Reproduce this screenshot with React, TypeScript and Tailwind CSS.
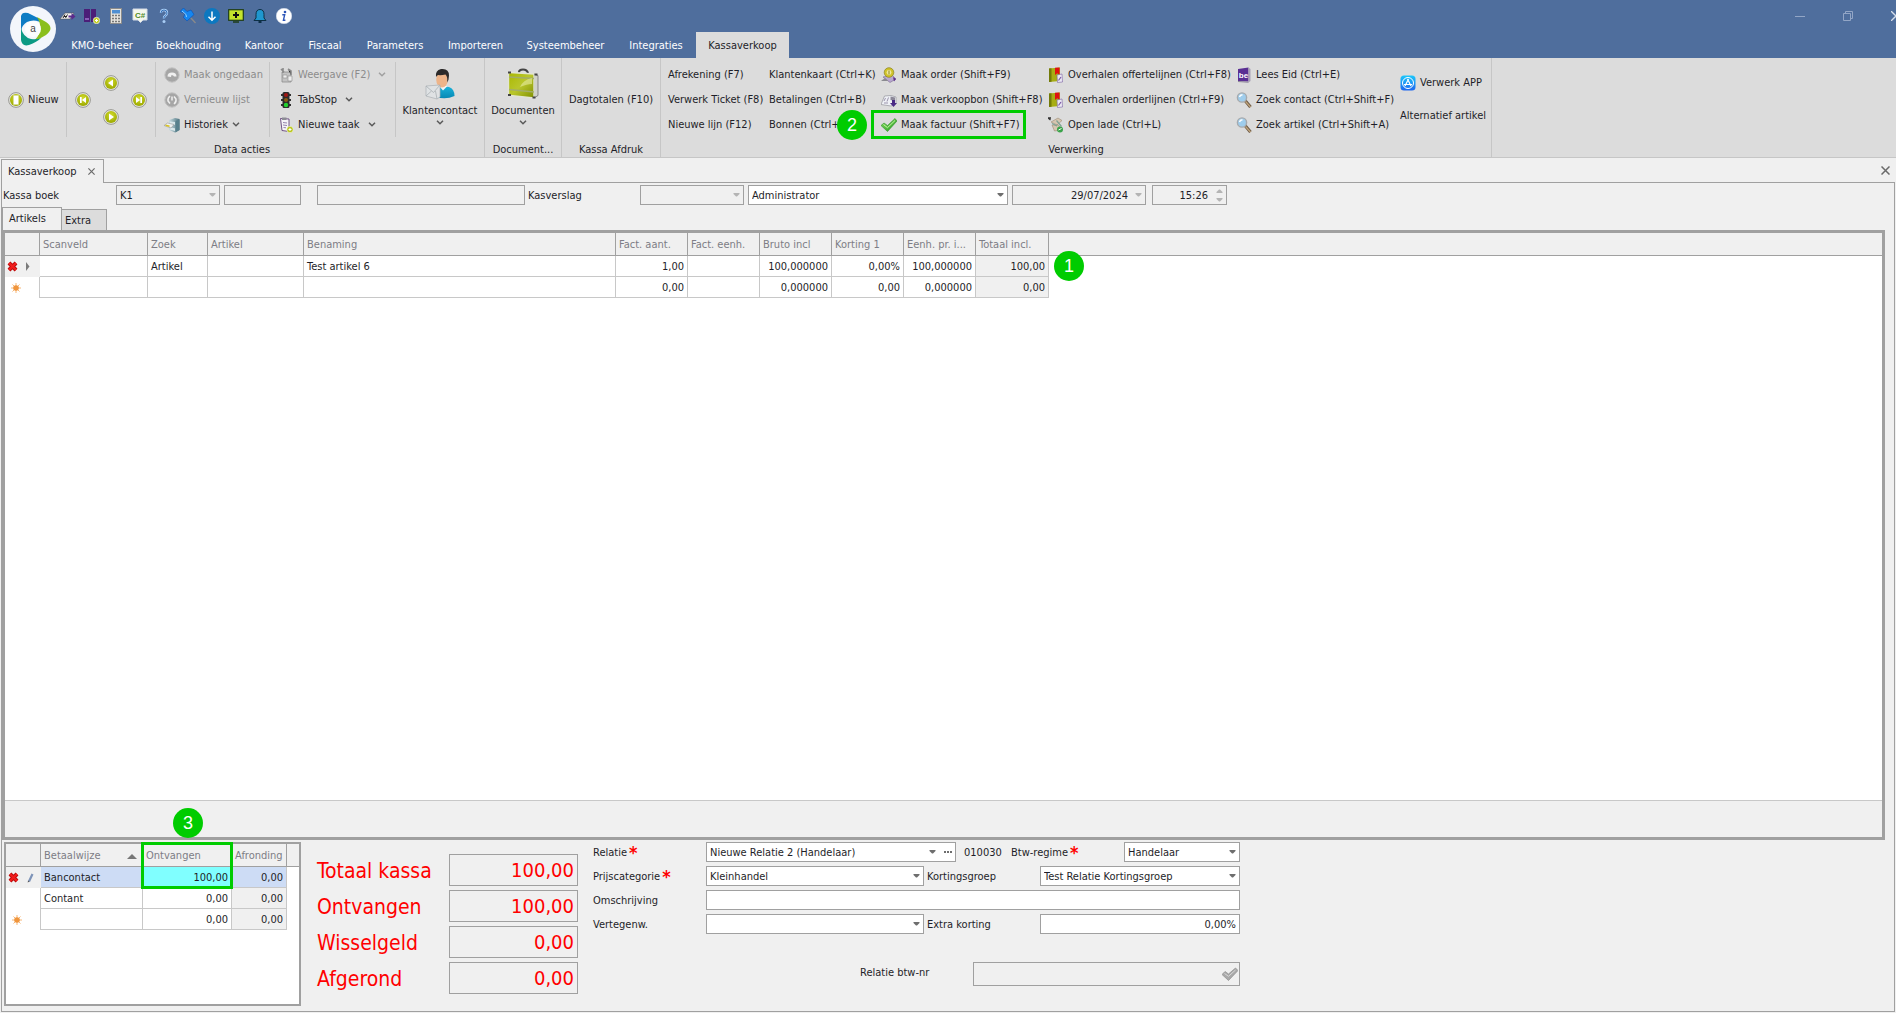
import React from "react";

type Kids = { children?: React.ReactNode };

/* ---------- icon primitives ---------- */

function Svg({ children, size = "s" }: Kids & { size?: "s" | "l" }) {
  return size === "s" ? (
    <svg viewBox="0 0 16 16" className="size-4 shrink-0" aria-hidden="true">{children}</svg>
  ) : (
    <svg viewBox="0 0 32 32" className="size-8 shrink-0" aria-hidden="true">{children}</svg>
  );
}

function Defs() {
  return (
    <svg className="absolute size-0" aria-hidden="true">
      <defs>
        <radialGradient id="olive" cx="50%" cy="35%" r="65%">
          <stop offset="0" stopColor="#d3dc2c" />
          <stop offset="1" stopColor="#9ba800" />
        </radialGradient>
        <linearGradient id="case" x1="0" y1="0" x2="1" y2="1">
          <stop offset="0" stopColor="#a9b800" />
          <stop offset="0.5" stopColor="#b9c62c" />
          <stop offset="1" stopColor="#7f8f00" />
        </linearGradient>
        <linearGradient id="shirt" x1="0" y1="0" x2="0" y2="1">
          <stop offset="0" stopColor="#19b4dc" />
          <stop offset="1" stopColor="#0788b4" />
        </linearGradient>
        <linearGradient id="store" x1="0" y1="0" x2="0" y2="1">
          <stop offset="0" stopColor="#1cc8fb" />
          <stop offset="1" stopColor="#1d66f0" />
        </linearGradient>
        <linearGradient id="okGreen" x1="0" y1="0" x2="1" y2="1">
          <stop offset="0" stopColor="#8be060" />
          <stop offset="1" stopColor="#1f9a1f" />
        </linearGradient>
        <linearGradient id="metal" x1="0" y1="0" x2="1" y2="0">
          <stop offset="0" stopColor="#c9dde2" />
          <stop offset="1" stopColor="#4f7480" />
        </linearGradient>
      </defs>
    </svg>
  );
}

function Logo() {
  return (
    <svg viewBox="0 0 46 46" className="size-[46px]" aria-hidden="true">
      <circle cx="23" cy="23" r="23" fill="#f3f6fb" />
      <path d="M11 25V10q1-4.500 7-3l10 5q5 3 6 6Q25 12 17 16q-5 3-6 9z" fill="#0d7cc4" />
      <path d="M27 11l9 5q9 6 0 13l-7 4-8 4q8-5 9-13 1-7-3-13z" fill="#8abf1c" />
      <path d="M11 22q2 9 10 11 6 1 10-1-4 4-12 7-7 2-8-5z" fill="#0b9a84" />
      <circle cx="23" cy="23" r="8" fill="#fbfdfd" />
      <text x="23" y="26" textAnchor="middle" fontSize="10" fill="#444" fontFamily="Liberation Sans, sans-serif">a</text>
    </svg>
  );
}

/* quick access */
const QPlate = () => (
  <Svg>
    <path d="M0 11l5-6h9l-4 6z" fill="#f2f2f2" stroke="#555" strokeWidth=".6" />
    <path d="M3 10l2-3.500M5.500 10l2-3.500M4 8.500h3" stroke="#222" strokeWidth="1" />
    <path d="M8.500 7.500h3V5L15.500 8.500l-4 3.500V9.500h-3z" fill="#5b2a8c" />
  </Svg>
);
const QPhones = () => (
  <Svg>
    <path d="M0 1h6v13H0zM7 1h5v13H7z" fill="#4b1e78" />
    <path d="M1 10h4v2H1z" fill="#8a5fb8" />
    <circle cx="12.500" cy="12.500" r="3.200" fill="#c3d024" stroke="#eee" strokeWidth=".7" />
    <path d="M12.500 11v3M11 12.500h3" stroke="#fff" />
  </Svg>
);
const QCalc = () => (
  <Svg>
    <rect x="2.500" y=".5" width="11" height="15" fill="#e6e3dc" stroke="#8b8b8b" />
    <rect x="4" y="2" width="8" height="3.500" fill="#4f8fd2" />
    <path d="M4 7.500h8M4 10.500h8M4 13.500h8" stroke="#777" strokeWidth="1.500" strokeDasharray="2 1" />
  </Svg>
);
const QSharp = () => (
  <Svg>
    <path d="M1 1h14v11h-4l-2.500 2.500L6 12H1z" fill="#f4f7ec" stroke="#d5dbe6" />
    <text x="8" y="10" textAnchor="middle" fontSize="8" fontWeight="700" fill="#4d8a25" fontFamily="Liberation Sans, sans-serif">C#</text>
  </Svg>
);
const QHelp = () => (
  <Svg>
    <path d="M5 5q0-3 3-3t3 3q0 1.700-1.700 2.800T8 10.500" fill="none" stroke="#a9cdf5" strokeWidth="2.400" />
    <path d="M5 5q0-3 3-3t3 3q0 1.700-1.700 2.800T8 10.500" fill="none" stroke="#3973b8" strokeWidth="1" />
    <circle cx="8" cy="13.500" r="1.500" fill="#a9cdf5" />
  </Svg>
);
const QPin = () => (
  <Svg>
    <path d="M10 9l5.500 6" stroke="#8a8a8a" strokeWidth="1.300" />
    <path d="M0 3.500L3.500 0l3.500 3.500 4-1.500 3 4.500-7 6.500-3.500-3.500L5 5.500z" fill="#1586f0" stroke="#0b4fb0" strokeWidth=".6" />
    <path d="M2 3l4 3.500L6.500 9" stroke="#8fd0ff" fill="none" />
  </Svg>
);
const QDown = () => (
  <Svg>
    <circle cx="8" cy="8" r="8" fill="#0c78c0" />
    <path d="M8 3.500v8.500M4.500 8.800L8 12.200l3.500-3.400" stroke="#fff" strokeWidth="1.500" fill="none" />
  </Svg>
);
const QScreen = () => (
  <Svg>
    <rect x=".7" y="1.700" width="14.600" height="10.600" fill="#c5e52c" stroke="#1d3b18" strokeWidth="1.200" />
    <path d="M8 4v6M5 7h6" stroke="#111" strokeWidth="2" />
    <path d="M5 14h6" stroke="#1d3b18" strokeWidth="1.500" />
  </Svg>
);
const QBell = () => (
  <Svg>
    <path d="M8 1.500q4 0 4 5v3.500l2 2.500H2l2-2.500V6.500q0-5 4-5z" fill="#1f97cf" stroke="#0d2f45" />
    <path d="M6.500 14h3" stroke="#0d2f45" strokeWidth="2" />
  </Svg>
);
const QInfo = () => (
  <Svg>
    <circle cx="8" cy="8" r="7.800" fill="#fff" stroke="#cfd8e6" strokeWidth=".5" />
    <circle cx="9" cy="4" r="1.300" fill="#2c55b8" />
    <path d="M6.300 6.700h2.400L7.400 12.300h2" stroke="#2c55b8" strokeWidth="1.400" fill="none" />
  </Svg>
);

/* ribbon */
const Disc = ({ children }: Kids) => (
  <Svg>
    <circle cx="8" cy="8" r="7.400" fill="#e4e4dc" stroke="#9a9a94" strokeWidth="1" />
    <circle cx="8" cy="8" r="6" fill="url(#olive)" />
    {children}
  </Svg>
);
const INew = () => <Disc><path d="M5.500 3.500h5v9h-5z" fill="#fff" stroke="#d9dfa0" strokeWidth=".5" /></Disc>;
const IFirst = () => <Disc><path d="M5 5h1.700v6H5zM11 5v6L6.800 8z" fill="#fff" /></Disc>;
const IPrev = () => <Disc><path d="M10 4.500v7L5 8z" fill="#fff" /></Disc>;
const INext = () => <Disc><path d="M6 4.500v7L11 8z" fill="#fff" /></Disc>;
const ILast = () => <Disc><path d="M9.300 5H11v6H9.300zM5 5v6l4.200-3z" fill="#fff" /></Disc>;
const GreyDisc = ({ children }: Kids) => (
  <Svg>
    <circle cx="8" cy="8" r="7.200" fill="#a6a6a6" stroke="#c2c2c2" />
    {children}
  </Svg>
);
const IUndo = () => <GreyDisc><path d="M3.500 9.500q0-4 4.500-4t4.500 4h-2.500q-.5-1.500-2.500-1.500L7 10z" fill="#f0f0f0" /></GreyDisc>;
const IRefresh = () => <GreyDisc><path d="M6 4Q3.500 6 4 9l2 2.500M10 12q2.500-2 2-5L10 4.500M8 4.500v4" stroke="#f0f0f0" strokeWidth="1.500" fill="none" /></GreyDisc>;
const IHistory = () => (
  <Svg>
    <path d="M5 3l6-2 4.500 1v11L11 15.500 5 13z" fill="url(#metal)" />
    <path d="M11.500 4l4-1.500v10.500l-4 2.500z" fill="#58808c" />
    <path d="M6 4.500l5 .5v3L6 7z" fill="#dbe8eb" />
    <path d="M6 10.500l5 .8v2.700l-5-1.500z" fill="#dbe8eb" />
    <path d="M0 8.500L3.500 6l6.500 1.500L7 11z" fill="#eef0f0" stroke="#8a8a8a" strokeWidth=".5" />
    <path d="M1.500 8.300l4 1" stroke="#d8c21e" strokeWidth="1.600" />
  </Svg>
);
const IView = () => (
  <Svg>
    <path d="M4 5h9v10H4z" fill="#c3c3c3" stroke="#8e8e8e" strokeWidth=".8" />
    <path d="M3 2l3 3M5 1v5M10 2l3 2v4" stroke="#8b8b8b" strokeWidth="1.600" />
    <path d="M5 8h4v3H5zM10 9h4v5h-4z" fill="#ededed" stroke="#8e8e8e" strokeWidth=".6" />
  </Svg>
);
const ITraffic = () => (
  <Svg>
    <path d="M3 3h10M3 8h10M3 13h10" stroke="#333" strokeWidth="2" />
    <rect x="4.500" y="0" width="7" height="16" rx="1.500" fill="#2c2c2c" />
    <circle cx="8" cy="3" r="2" fill="#a01612" />
    <circle cx="8" cy="8" r="2" fill="#8a5a12" />
    <circle cx="8" cy="13" r="2.200" fill="#23d32f" />
  </Svg>
);
const ITask = () => (
  <Svg>
    <path d="M2.500 1.500l8.500.5v12.500L4 13.500z" fill="#f5f3f8" stroke="#54316f" strokeWidth=".8" />
    <path d="M4 .5h4.500v2.500H4z" fill="#8c8c94" />
    <path d="M5 5.500l4 .5M5 8l4 .5M5.500 10.500l2.500.3" stroke="#7b669a" strokeWidth=".8" />
    <circle cx="12" cy="12.500" r="3.200" fill="#b9c51c" stroke="#fff" strokeWidth=".5" />
    <path d="M12 11v3M10.500 12.500h3" stroke="#fff" />
  </Svg>
);
const IPerson = () => (
  <Svg size="l">
    <path d="M12 29q-1-10 6-11l7 1q5.500 2 5.500 9-8.500 4-18.500 1z" fill="url(#shirt)" />
    <path d="M15 18l4 4.500 4.500-4.500z" fill="#f3f3f3" />
    <ellipse cx="18" cy="11.500" rx="5.800" ry="8" fill="#eeb489" />
    <path d="M12 9q-1-6.500 5-8 8-1 8 6.500 0 4.500-2 7Q24 9 21.500 6.500q-4.500 1-7.500.5-1.500 1-2 2z" fill="#2c2a2a" />
    <path d="M2 18l14-1v12l-3 2-11-3z" fill="#dfe2e4" stroke="#aab0b4" strokeWidth=".7" />
    <path d="M2 18l7.500 6.500L16 17M2 28l5.500-5M13 31l-1.500-8" fill="none" stroke="#aab0b4" strokeWidth=".8" />
  </Svg>
);
const ICase = () => (
  <Svg size="l">
    <path d="M12 4.500q0-3 4-3t5 3.500" fill="none" stroke="#444" strokeWidth="2.200" />
    <path d="M27 6l4 1.500v20L27 30z" fill="#d0d1cb" stroke="#555" strokeWidth=".6" />
    <path d="M1.500 5.500Q1 4.500 3 4.500l24 1.500v24L3 27.500q-1.500 0-1.500-1.500z" fill="url(#case)" stroke="#e2e4d4" strokeWidth="1.400" />
    <path d="M2 9l25 1.500M2 21.500l25 2.500" stroke="#a3ad6a" strokeWidth="1.400" />
    <path d="M13 19q3-7 12-9v6q-5 0-12 3z" fill="#e0e690" opacity=".7" />
    <path d="M1 4.500h3M1 27h3M25.500 29.500h3M27.500 6.500h3" stroke="#444" strokeWidth="1.800" />
  </Svg>
);
const IOrder = () => (
  <Svg>
    <path d="M2 10l9-2 4 4-6 3.500z" fill="#b9a8cf" stroke="#6b5a80" strokeWidth=".5" />
    <circle cx="8" cy="5.500" r="4.800" fill="#cfc22a" stroke="#8b8420" strokeWidth=".7" />
    <circle cx="8" cy="5.500" r="2.400" fill="#efe89a" />
    <path d="M8 3.500v4" stroke="#8b8420" />
    <path d="M0 14l4-3 3 3z" fill="#8a8a90" />
    <path d="M12 10l3 2-2 2.500z" fill="#5b2a8c" />
  </Svg>
);
const IReceipt = () => (
  <Svg>
    <path d="M0 12.500L3.500 4l6.500-.5 5 1.500v6.500L10 14z" fill="#eef0f5" stroke="#86868e" strokeWidth=".6" />
    <path d="M3 9l1.500-3M6 9.500l1.500-4M3 11h4" stroke="#9a93ab" strokeWidth="1" />
    <path d="M9.500 4.500l4.500 1v3.500l-4.500-1z" fill="#8b8797" />
    <path d="M11 8h3v3h2l-3.500 4L9 11h2z" fill="#4a2a85" />
  </Svg>
);
const ICheck = () => (
  <Svg>
    <path d="M0 8.500L3 6l3.500 2.500L14 1.500 16 4 6.500 14.500z" fill="url(#okGreen)" stroke="#2f8d2a" strokeWidth=".6" />
    <path d="M2.500 7.500l4 3.200L14 3.500" stroke="#c8f5a8" strokeWidth="1" fill="none" />
  </Svg>
);
const IBook = () => (
  <Svg>
    <path d="M1 1.500L12 .5v13.500L1 15z" fill="#a7ad14" />
    <path d="M1 1.500l2.500-.3v13.500L1 15z" fill="#727a08" />
    <path d="M7 .8l4.500-.3v7.500L9.300 6.300 7 8z" fill="#e01010" />
    <path d="M9 8l5-1 .5 8-5 .5z" fill="#ece9f4" stroke="#7b62a3" strokeWidth=".6" />
    <path d="M10.500 13.500l2.500-3.500" stroke="#7b5aa6" strokeWidth="1.200" />
  </Svg>
);
const IDrawer = () => (
  <Svg>
    <path d="M0 1l2.500 2M0 1h3" stroke="#333" strokeWidth="1.300" />
    <path d="M3 5l7-4 4 2.500L9 8zM4 8h6.500l3 5-7 1z" fill="#d6c6b0" stroke="#9a8a74" strokeWidth=".6" />
    <path d="M4 6.500l5 2.500M8.500 3.500l5 6" stroke="#7fa394" strokeWidth="1.200" />
    <circle cx="12" cy="12.500" r="3" fill="#3aa34a" />
    <path d="M10.500 13l3-1.500" stroke="#fff" />
  </Svg>
);
const IEid = () => (
  <Svg>
    <path d="M2 2L12.500.5v14L2 14z" fill="#5a2f93" />
    <path d="M12.500.5l2 1.500v12l-2 1.500z" fill="#a8a2b5" />
    <path d="M2 14l10.500.7v1L2 15z" fill="#8a8496" />
    <text x="7.500" y="11" textAnchor="middle" fontSize="8" fontWeight="700" fill="#fff" fontFamily="Liberation Sans, sans-serif">be</text>
  </Svg>
);
const ISearch = () => (
  <Svg>
    <path d="M9 8.500l5.500 6.500" stroke="#6b5844" strokeWidth="3.200" />
    <path d="M9.500 9.500l5 5.500" stroke="#c0a57c" strokeWidth="1.300" />
    <circle cx="6" cy="5.500" r="4.600" fill="#9fcdec" stroke="#a6aaae" strokeWidth="1.400" />
    <path d="M3.500 5Q4 3 6.500 2.800" stroke="#fff" strokeWidth="1.500" fill="none" />
  </Svg>
);
const IStore = () => (
  <Svg>
    <rect x=".5" y=".5" width="15" height="15" rx="3.500" fill="url(#store)" />
    <circle cx="8" cy="8" r="5.500" fill="none" stroke="#fff" />
    <path d="M8.500 4L5 11M7.500 4l3.500 7M4 9.500h8" stroke="#fff" strokeWidth="1.200" />
  </Svg>
);

/* small glyphs */
const Chevron = ({ muted = false }: { muted?: boolean }) => (
  <svg viewBox="0 0 8 5" className={muted ? "h-[5px] w-2 shrink-0 text-[#a0a0a0]" : "h-[5px] w-2 shrink-0 text-[#5a5a5a]"} aria-hidden="true">
    <path d="M1 .8L4 3.800 7 .8" fill="none" stroke="currentColor" strokeWidth="1.500" />
  </svg>
);
const Caret = ({ muted = false }: { muted?: boolean }) => (
  <svg viewBox="0 0 7 4" className={muted ? "h-1 w-[7px] text-[#b4b4b4]" : "h-1 w-[7px] text-[#6e6e6e]"} aria-hidden="true">
    <path d="M.5 0h6v1L4 3.500H3L.5 1z" fill="currentColor" />
  </svg>
);
const Cross = ({ small = false }: { small?: boolean }) => (
  <svg viewBox="0 0 9 9" className={small ? "size-[7px]" : "size-[9px]"} aria-hidden="true">
    <path d="M.5.5l8 8M8.500.5l-8 8" stroke="#6a6a6a" strokeWidth="1.500" />
  </svg>
);
const RedX = () => (
  <svg viewBox="0 0 11 11" className="size-[11px]" role="img" aria-label="Verwijderen">
    <path d="M2 2l7 7M9 2L2 9" stroke="#b40d0d" strokeWidth="4" />
    <path d="M2 2l7 7M9 2L2 9" stroke="#f21c1c" strokeWidth="2.400" />
  </svg>
);
const Star = () => (
  <svg viewBox="0 0 10 10" className="size-[10px]" role="img" aria-label="Nieuwe rij">
    <path d="M5 0v10M0 5h10M1.500 1.500l7 7M8.500 1.500l-7 7" stroke="#f7b878" />
    <circle cx="5" cy="5" r="2.800" fill="#f0953c" />
  </svg>
);
const RowArrow = () => (
  <svg viewBox="0 0 4 9" className="h-[9px] w-1" aria-hidden="true"><path d="M0 0l3.500 4.500L0 9z" fill="#7a7a7a" /></svg>
);
const Pencil = () => (
  <svg viewBox="0 0 7 10" className="h-[10px] w-[7px]" aria-hidden="true">
    <path d="M5.500 1L2 8.500" stroke="#7d93b8" strokeWidth="2.200" /><path d="M1 7.500l-.3 2 1.800-1z" fill="#555" />
  </svg>
);

/* ---------- ribbon parts ---------- */

type CmdProps = Kids & { icon?: React.ReactNode; label: string; menu?: "near" | "far"; disabled?: boolean };

function Cmd({ icon, label, menu, disabled, children }: CmdProps) {
  return (
    <button
      type="button"
      disabled={disabled}
      className={
        disabled
          ? "relative flex h-[25px] items-center gap-1 whitespace-nowrap text-[#8c8c8c]"
          : "relative flex h-[25px] items-center gap-1 whitespace-nowrap"
      }
    >
      {icon}
      <span>{label}</span>
      {menu && <span className={menu === "far" ? "ml-1" : ""}><Chevron muted={disabled} /></span>}
      {children}
    </button>
  );
}

function BigCmd({ icon, label }: { icon: React.ReactNode; label: string }) {
  return (
    <button type="button" className="flex w-full flex-col items-center pt-1.5 whitespace-nowrap">
      {icon}
      <span className="mt-1">{label}</span>
      <span className="mt-0.5"><Chevron /></span>
    </button>
  );
}

function Group({ title, children }: Kids & { title: string }) {
  return (
    <section className="flex flex-col border-r border-[#c6c6c6]">
      <div className="flex h-[79px] pt-1">{children}</div>
      <h2 className="pt-1.5 text-center">{title}</h2>
    </section>
  );
}

function Badge({ n }: { n: number }) {
  return (
    <span className="flex size-[30px] items-center justify-center rounded-full bg-[#00cc00] font-['Liberation_Sans',sans-serif] text-lg text-white">
      {n}
    </span>
  );
}

/* ---------- form parts ---------- */

function Select({ id, label, value, className, disabled, extra }: { id: string; label: string; value: string; className: string; disabled?: boolean; extra?: boolean }) {
  return (
    <div className={`relative h-5 ${className}`}>
      <select
        id={id}
        aria-label={label}
        disabled={disabled}
        defaultValue={value}
        className="h-5 w-full appearance-none border border-[#a0a0a0] bg-white pt-px pr-5 pl-[3px] text-[#1e1e28] opacity-100 outline-none disabled:bg-[#f0f0f0]"
      >
        <option>{value}</option>
      </select>
      <span className="pointer-events-none absolute inset-y-0 right-1 flex items-center gap-2">
        <Caret muted={disabled} />
        {extra && (
          <svg viewBox="0 0 8 2" className="h-0.5 w-2" aria-hidden="true"><path d="M0 0h2v2H0zM3 0h2v2H3zM6 0h2v2H6z" fill="#6e6e6e" /></svg>
        )}
      </span>
    </div>
  );
}

function Input({ id, label, value = "", className, disabled }: { id: string; label: string; value?: string; className: string; disabled?: boolean }) {
  return (
    <input
      id={id}
      aria-label={label}
      defaultValue={value}
      disabled={disabled}
      className={`h-5 border border-[#a0a0a0] bg-white pt-px text-[#1e1e28] outline-none disabled:bg-[#f0f0f0] ${className}`}
    />
  );
}

const Req = () => <span className="text-lg leading-none font-bold text-[#f00]">*</span>;

/* ---------- data ---------- */

const menus = [
  ["KMO-beheer", "w-[86px]"],
  ["Boekhouding", "w-[87px]"],
  ["Kantoor", "w-[64px]"],
  ["Fiscaal", "w-[58px]"],
  ["Parameters", "w-[82px]"],
  ["Importeren", "w-[79px]"],
  ["Systeembeheer", "w-[101px]"],
  ["Integraties", "w-[80px]"],
];

const heads = ["Scanveld", "Zoek", "Artikel", "Benaming", "Fact. aant.", "Fact. eenh.", "Bruto incl", "Korting 1", "Eenh. pr. i...", "Totaal incl."];
const rows = [
  ["", "Artikel", "", "Test artikel 6", "1,00", "", "100,000000", "0,00%", "100,000000", "100,00"],
  ["", "", "", "", "0,00", "", "0,000000", "0,00", "0,000000", "0,00"],
];

const payments = [
  ["Bancontact", "100,00", "0,00"],
  ["Contant", "0,00", "0,00"],
  ["", "0,00", "0,00"],
];

const totals = [
  ["Totaal kassa", "100,00"],
  ["Ontvangen", "100,00"],
  ["Wisselgeld", "0,00"],
  ["Afgerond", "0,00"],
];

const quick = [
  ["Nummerplaat", QPlate],
  ["Toestellen", QPhones],
  ["Rekenmachine", QCalc],
  ["Script", QSharp],
  ["Help", QHelp],
  ["Vastmaken", QPin],
  ["Downloaden", QDown],
  ["Scherm", QScreen],
  ["Meldingen", QBell],
  ["Info", QInfo],
] as const;

/* ---------- page sections ---------- */

function TitleBar() {
  return (
    <header className="flex h-[58px] overflow-hidden bg-[#4f6e9d] text-white">
      <div className="w-14 shrink-0 pt-1.5 pl-2.5"><Logo /></div>
      <div className="flex flex-1 flex-col">
        <div className="flex h-8 items-center">
          {quick.map(([name, Icon]) => (
            <button key={name} type="button" aria-label={name} className="flex w-6 justify-center"><Icon /></button>
          ))}
          <div className="-mr-6 ml-auto flex text-[#93a6c6]">
            <button type="button" aria-label="Minimaliseren" className="flex w-12 justify-center">
              <svg viewBox="0 0 10 10" className="size-[10px]"><path d="M0 5.500h10" stroke="currentColor" /></svg>
            </button>
            <button type="button" aria-label="Verkleinen" className="flex w-12 justify-center">
              <svg viewBox="0 0 10 10" className="size-[10px]"><path d="M.5 2.500h7v7h-7zM2.500 2.500v-2h7v7h-2" fill="none" stroke="currentColor" /></svg>
            </button>
            <button type="button" aria-label="Sluiten" className="flex w-12 justify-center">
              <svg viewBox="0 0 10 10" className="size-[10px]"><path d="M0 0l10 10M10 0L0 10" stroke="#d5deeb" strokeWidth="1.300" /></svg>
            </button>
          </div>
        </div>
        <nav className="flex h-[26px] pl-[3px]">
          {menus.map(([m, w]) => (
            <button key={m} type="button" className={`pt-0.5 text-center ${w}`}>{m}</button>
          ))}
          <button type="button" className="w-[93px] bg-[#dcdcdc] pt-0.5 text-center text-[#1e1e28]">Kassaverkoop</button>
        </nav>
      </div>
    </header>
  );
}

function Ribbon() {
  return (
    <div className="flex h-[100px] border-b border-[#c6c6c6] bg-[#dcdcdc]">
      <Group title="Data acties">
        <div className="flex w-[67px] items-center border-r border-[#c6c6c6] pl-2"><Cmd icon={<INew />} label="Nieuw" /></div>
        <div className="flex w-[89px] items-center border-r border-[#c6c6c6] pl-0.5">
          <div className="grid grid-cols-[28px_28px_28px] grid-rows-[17px_17px_17px] place-items-center">
            <button type="button" aria-label="Vorige" className="col-start-2"><IPrev /></button>
            <button type="button" aria-label="Eerste" className="col-start-1 row-start-2"><IFirst /></button>
            <button type="button" aria-label="Laatste" className="col-start-3 row-start-2"><ILast /></button>
            <button type="button" aria-label="Volgende" className="col-start-2 row-start-3"><INext /></button>
          </div>
        </div>
        <div className="w-[114px] border-r border-[#c6c6c6] pl-2">
          <Cmd icon={<IUndo />} label="Maak ongedaan" disabled />
          <Cmd icon={<IRefresh />} label="Vernieuw lijst" disabled />
          <Cmd icon={<IHistory />} label="Historiek" menu="near" />
        </div>
        <div className="w-[126px] border-r border-[#c6c6c6] pl-2">
          <Cmd icon={<IView />} label="Weergave (F2)" menu="far" disabled />
          <Cmd icon={<ITraffic />} label="TabStop" menu="far" />
          <Cmd icon={<ITask />} label="Nieuwe taak" menu="far" />
        </div>
        <div className="w-[88px]"><BigCmd icon={<IPerson />} label="Klantencontact" /></div>
      </Group>
      <Group title="Document...">
        <div className="w-[76px]"><BigCmd icon={<ICase />} label="Documenten" /></div>
      </Group>
      <Group title="Kassa Afdruk">
        <div className="flex w-[98px] items-center justify-center"><Cmd label="Dagtotalen (F10)" /></div>
      </Group>
      <Group title="Verwerking">
        <div className="w-[108px] pl-[7px]">
          <Cmd label="Afrekening (F7)" />
          <Cmd label="Verwerk Ticket (F8)" />
          <Cmd label="Nieuwe lijn (F12)" />
        </div>
        <div className="w-28">
          <Cmd label="Klantenkaart (Ctrl+K)" />
          <Cmd label="Betalingen (Ctrl+B)" />
          <Cmd label="Bonnen (Ctrl+" />
        </div>
        <div className="w-[167px]">
          <Cmd icon={<IOrder />} label="Maak order (Shift+F9)" />
          <Cmd icon={<IReceipt />} label="Maak verkoopbon (Shift+F8)" />
          <Cmd icon={<ICheck />} label="Maak factuur (Shift+F7)">
            <span className="pointer-events-none absolute -inset-y-0.5 -left-2.5 w-[155px] border-3 border-[#00cc00]" />
            <span className="absolute -top-0.5 -left-11"><Badge n={2} /></span>
          </Cmd>
        </div>
        <div className="w-[188px]">
          <Cmd icon={<IBook />} label="Overhalen offertelijnen (Ctrl+F8)" />
          <Cmd icon={<IBook />} label="Overhalen orderlijnen (Ctrl+F9)" />
          <Cmd icon={<IDrawer />} label="Open lade (Ctrl+L)" />
        </div>
        <div className="w-[164px]">
          <Cmd icon={<IEid />} label="Lees Eid (Ctrl+E)" />
          <Cmd icon={<ISearch />} label="Zoek contact (Ctrl+Shift+F)" />
          <Cmd icon={<ISearch />} label="Zoek artikel (Ctrl+Shift+A)" />
        </div>
        <div className="flex w-[91px] flex-col gap-2 pt-2">
          <Cmd icon={<IStore />} label="Verwerk APP" />
          <Cmd label="Alternatief artikel" />
        </div>
      </Group>
    </div>
  );
}

function FilterRow() {
  return (
    <div className="flex items-center pt-0.5">
      <label htmlFor="boek" className="w-[114px] pt-px pl-px">Kassa boek</label>
      <Select id="boek" label="Kassa boek" value="K1" className="w-[104px]" disabled />
      <Input id="nr" label="Nummer" className="ml-1 w-[77px] px-[3px]" disabled />
      <Input id="oms" label="Boek omschrijving" className="ml-4 w-[208px] px-[3px]" disabled />
      <label htmlFor="verslag" className="ml-[3px] w-28 pt-px">Kasverslag</label>
      <Select id="verslag" label="Kasverslag" value="" className="w-[104px]" disabled />
      <Select id="user" label="Gebruiker" value="Administrator" className="ml-1 w-[260px]" />
      <div className="relative ml-1">
        <Input id="datum" label="Datum" value="29/07/2024" className="w-[134px] pr-[17px] text-right" disabled />
        <span className="absolute inset-y-0 right-1 flex items-center"><Caret muted /></span>
      </div>
      <div className="relative ml-1.5">
        <Input id="uur" label="Uur" value="15:26" className="w-[75px] pr-[18px] text-right" disabled />
        <span className="absolute inset-y-0 right-1 flex flex-col items-center justify-center gap-[5px]">
          <span className="rotate-180"><Caret muted /></span>
          <Caret muted />
        </span>
      </div>
    </div>
  );
}

function Articles() {
  return (
    <section className="mr-[9px] flex flex-1 flex-col border-3 border-[#a0a0a0] bg-white">
      <table className="w-full table-fixed border-separate border-spacing-0">
        <colgroup>
          <col className="w-[35px]" />
          <col className="w-[108px]" />
          <col className="w-[60px]" />
          <col className="w-[96px]" />
          <col className="w-[312px]" />
          <col className="w-[72px]" />
          <col className="w-[72px]" />
          <col className="w-[72px]" />
          <col className="w-[72px]" />
          <col className="w-[72px]" />
          <col className="w-[73px]" />
          <col />
        </colgroup>
        <thead>
          <tr className="h-[23px] bg-[#f0f0f0] text-left text-[#7d7d85]">
            <th className="border-r border-b border-[#a0a0a0]" />
            {heads.map((h) => (
              <th key={h} className="overflow-hidden border-r border-b border-[#a0a0a0] px-[3px] pt-0.5 font-normal whitespace-nowrap">{h}</th>
            ))}
            <th className="border-b border-[#a0a0a0]" />
          </tr>
        </thead>
        <tbody>
          {rows.map((r, i) => (
            <tr key={i} className="h-[21px]">
              <td className={i === 0 ? "bg-[#f0f0f0] p-0" : "border-r border-[#c8c8c8] p-0"}>
                {i === 0 ? (
                  <div className="flex items-center gap-2 pl-0.5"><RedX /><RowArrow /></div>
                ) : (
                  <div className="pl-1.5"><Star /></div>
                )}
              </td>
              {r.map((c, j) => (
                <td
                  key={j}
                  className={
                    j === 9
                      ? "border-r border-b border-[#c8c8c8] bg-[#f0f0f0] px-[3px] pt-0.5 text-right"
                      : j > 3
                        ? "border-r border-b border-[#c8c8c8] px-[3px] pt-0.5 text-right"
                        : "border-r border-b border-[#c8c8c8] px-[3px] pt-0.5"
                  }
                >
                  {c}
                </td>
              ))}
              <td className="p-0">
                {i === 0 && (
                  <div className="relative">
                    <span className="absolute -top-4 left-[5px]"><Badge n={1} /></span>
                  </div>
                )}
              </td>
            </tr>
          ))}
        </tbody>
      </table>
      <div className="mt-auto h-[37px] border-t border-[#c8c8c8] bg-[#f0f0f0]" />
    </section>
  );
}

function Payments() {
  return (
    <section className="ml-0.5 min-h-[164px] w-[297px] border-2 border-[#a0a0a0] bg-white">
      <table className="w-full table-fixed border-separate border-spacing-0">
        <colgroup>
          <col className="w-[35px]" />
          <col className="w-[102px]" />
          <col className="w-[89px]" />
          <col className="w-[55px]" />
          <col />
        </colgroup>
        <thead>
          <tr className="h-[23px] bg-[#f0f0f0] text-left text-[#7d7d85]">
            <th className="border-r border-b border-[#a0a0a0]" />
            <th className="border-r border-b border-[#a0a0a0] px-[3px] pt-0.5 font-normal">
              <div className="flex items-center justify-between pr-0.5">
                Betaalwijze
                <svg viewBox="0 0 10 6" className="h-1.5 w-2.5" aria-hidden="true"><path d="M0 6l5-5 5 5z" fill="#777" /></svg>
              </div>
            </th>
            <th className="relative border-r border-b border-[#a0a0a0] px-[3px] pt-0.5 font-normal">
              Ontvangen
              <span className="pointer-events-none absolute -top-0.5 -right-0.5 -left-0.5 h-[47px] border-3 border-[#00cc00]" />
              <span className="absolute -top-9 left-[30px]"><Badge n={3} /></span>
            </th>
            <th className="border-r border-b border-[#a0a0a0] px-[3px] pt-0.5 font-normal whitespace-nowrap">Afronding</th>
            <th className="border-b border-[#a0a0a0]" />
          </tr>
        </thead>
        <tbody>
          {payments.map(([name, got, round], i) => (
            <tr key={i} className="h-[21px]">
              <td className={i === 0 ? "bg-[#f0f0f0] p-0" : "border-r border-[#c8c8c8] p-0"}>
                {i === 0 && <div className="flex items-center gap-2 pl-0.5"><RedX /><Pencil /></div>}
                {i === 2 && <div className="pl-1.5"><Star /></div>}
              </td>
              <td className={i === 0 ? "border-r border-b border-[#c8c8c8] bg-[#cddcf5] px-[3px] pt-0.5" : "border-r border-b border-[#c8c8c8] px-[3px] pt-0.5"}>{name}</td>
              <td className={i === 0 ? "border-r border-b border-[#c8c8c8] bg-[#80ffff] px-[3px] pt-0.5 text-right" : "border-r border-b border-[#c8c8c8] px-[3px] pt-0.5 text-right"}>{got}</td>
              <td className={i === 0 ? "border-r border-b border-[#c8c8c8] bg-[#cddcf5] px-[3px] pt-0.5 text-right" : "border-r border-b border-[#c8c8c8] bg-[#f0f0f0] px-[3px] pt-0.5 text-right"}>{round}</td>
              <td className="p-0" />
            </tr>
          ))}
        </tbody>
      </table>
    </section>
  );
}

function Totals() {
  return (
    <section className="ml-4 flex flex-col gap-1 pt-3 text-[21px] leading-7 text-[#f00]">
      {totals.map(([name, amount]) => (
        <div key={name} className="flex items-center">
          <label htmlFor={name} className="w-[132px] pt-0.5 whitespace-nowrap">{name}</label>
          <input id={name} readOnly defaultValue={amount} className="h-8 w-[129px] border border-[#a0a0a0] bg-[#f0f0f0] px-[3px] text-right text-xl outline-none" />
        </div>
      ))}
    </section>
  );
}

function RelationForm() {
  return (
    <form className="ml-[15px] flex w-[647px] flex-col gap-1">
      <div className="flex items-center">
        <label htmlFor="relatie" className="flex h-5 w-[113px] items-center gap-0.5 pt-px">Relatie <Req /></label>
        <Select id="relatie" label="Relatie" value="Nieuwe Relatie 2 (Handelaar)" className="w-[250px]" extra />
        <span className="ml-2 w-[47px] pt-px">010030</span>
        <label htmlFor="regime" className="flex h-5 items-center gap-0.5 pt-px">Btw-regime <Req /></label>
        <Select id="regime" label="Btw-regime" value="Handelaar" className="ml-auto w-[116px]" />
      </div>
      <div className="flex items-center">
        <label htmlFor="prijs" className="flex h-5 w-[113px] items-center gap-0.5 pt-px">Prijscategorie <Req /></label>
        <Select id="prijs" label="Prijscategorie" value="Kleinhandel" className="w-[218px]" />
        <label htmlFor="korting" className="ml-[3px] pt-px">Kortingsgroep</label>
        <Select id="korting" label="Kortingsgroep" value="Test Relatie Kortingsgroep" className="ml-auto w-[200px]" />
      </div>
      <div className="flex items-center">
        <label htmlFor="omschrijving" className="w-[113px] pt-px">Omschrijving</label>
        <Input id="omschrijving" label="Omschrijving" className="flex-1 px-[3px]" />
      </div>
      <div className="flex items-center">
        <label htmlFor="verteg" className="w-[113px] pt-px">Vertegenw.</label>
        <Select id="verteg" label="Vertegenw." value="" className="w-[218px]" />
        <label htmlFor="extra" className="ml-[3px] pt-px">Extra korting</label>
        <Input id="extra" label="Extra korting" value="0,00%" className="ml-auto w-[200px] px-[3px] text-right" />
      </div>
      <div className="mt-6 flex items-start pl-[267px]">
        <label htmlFor="btwnr" className="pt-1">Relatie btw-nr</label>
        <div className="relative ml-auto w-[267px]">
          <input id="btwnr" readOnly className="h-6 w-full border border-[#a0a0a0] bg-[#f0f0f0] pr-6 pl-1 outline-none" />
          <button type="button" aria-label="Controleer btw-nummer" className="absolute inset-y-0 right-0.5 flex items-center">
            <Svg>
              <path d="M0 8.500l3-3 3.500 2.500L13.500 2 16 4.500 6.500 14.500z" fill="#a9a9a9" stroke="#8c8c8c" strokeWidth=".7" />
              <path d="M2.500 7.500l4 2.800L13.500 4" stroke="#d6d6d6" fill="none" />
            </Svg>
          </button>
        </div>
      </div>
    </form>
  );
}

export default function App() {
  return (
    <div className="flex min-h-screen min-w-[1500px] flex-col overflow-hidden bg-[#f0f0f0] font-['DejaVu_Sans_Condensed','DejaVu_Sans',sans-serif] text-[11px] leading-[14px] text-[#1e1e28]">
      <Defs />
      <TitleBar />
      <Ribbon />
      <div className="flex items-end justify-between px-px pt-px">
        <div className="relative -mb-px flex h-6 w-[103px] items-center justify-between border border-b-0 border-[#a0a0a0] bg-[#f0f0f0] pr-2 pl-1.5">
          <button type="button">Kassaverkoop</button>
          <button type="button" aria-label="Tabblad sluiten"><Cross small /></button>
        </div>
        <button type="button" aria-label="Sluiten" className="mr-[5px] mb-[7px]"><Cross /></button>
      </div>
      <main className="mx-px mb-px flex flex-1 flex-col border border-[#a0a0a0] pb-[5px]">
        <FilterRow />
        <div className="mt-0.5 flex items-end">
          <button type="button" className="h-[23px] w-[60px] border border-b-0 border-[#a0a0a0] pl-1.5 text-left">Artikels</button>
          <button type="button" className="h-[21px] w-[45px] border border-b-0 border-l-0 border-[#a0a0a0] bg-[#dcdcdc] pt-px pl-[3px] text-left">Extra</button>
        </div>
        <Articles />
        <div className="mt-0.5 flex">
          <Payments />
          <Totals />
          <RelationForm />
        </div>
      </main>
    </div>
  );
}
